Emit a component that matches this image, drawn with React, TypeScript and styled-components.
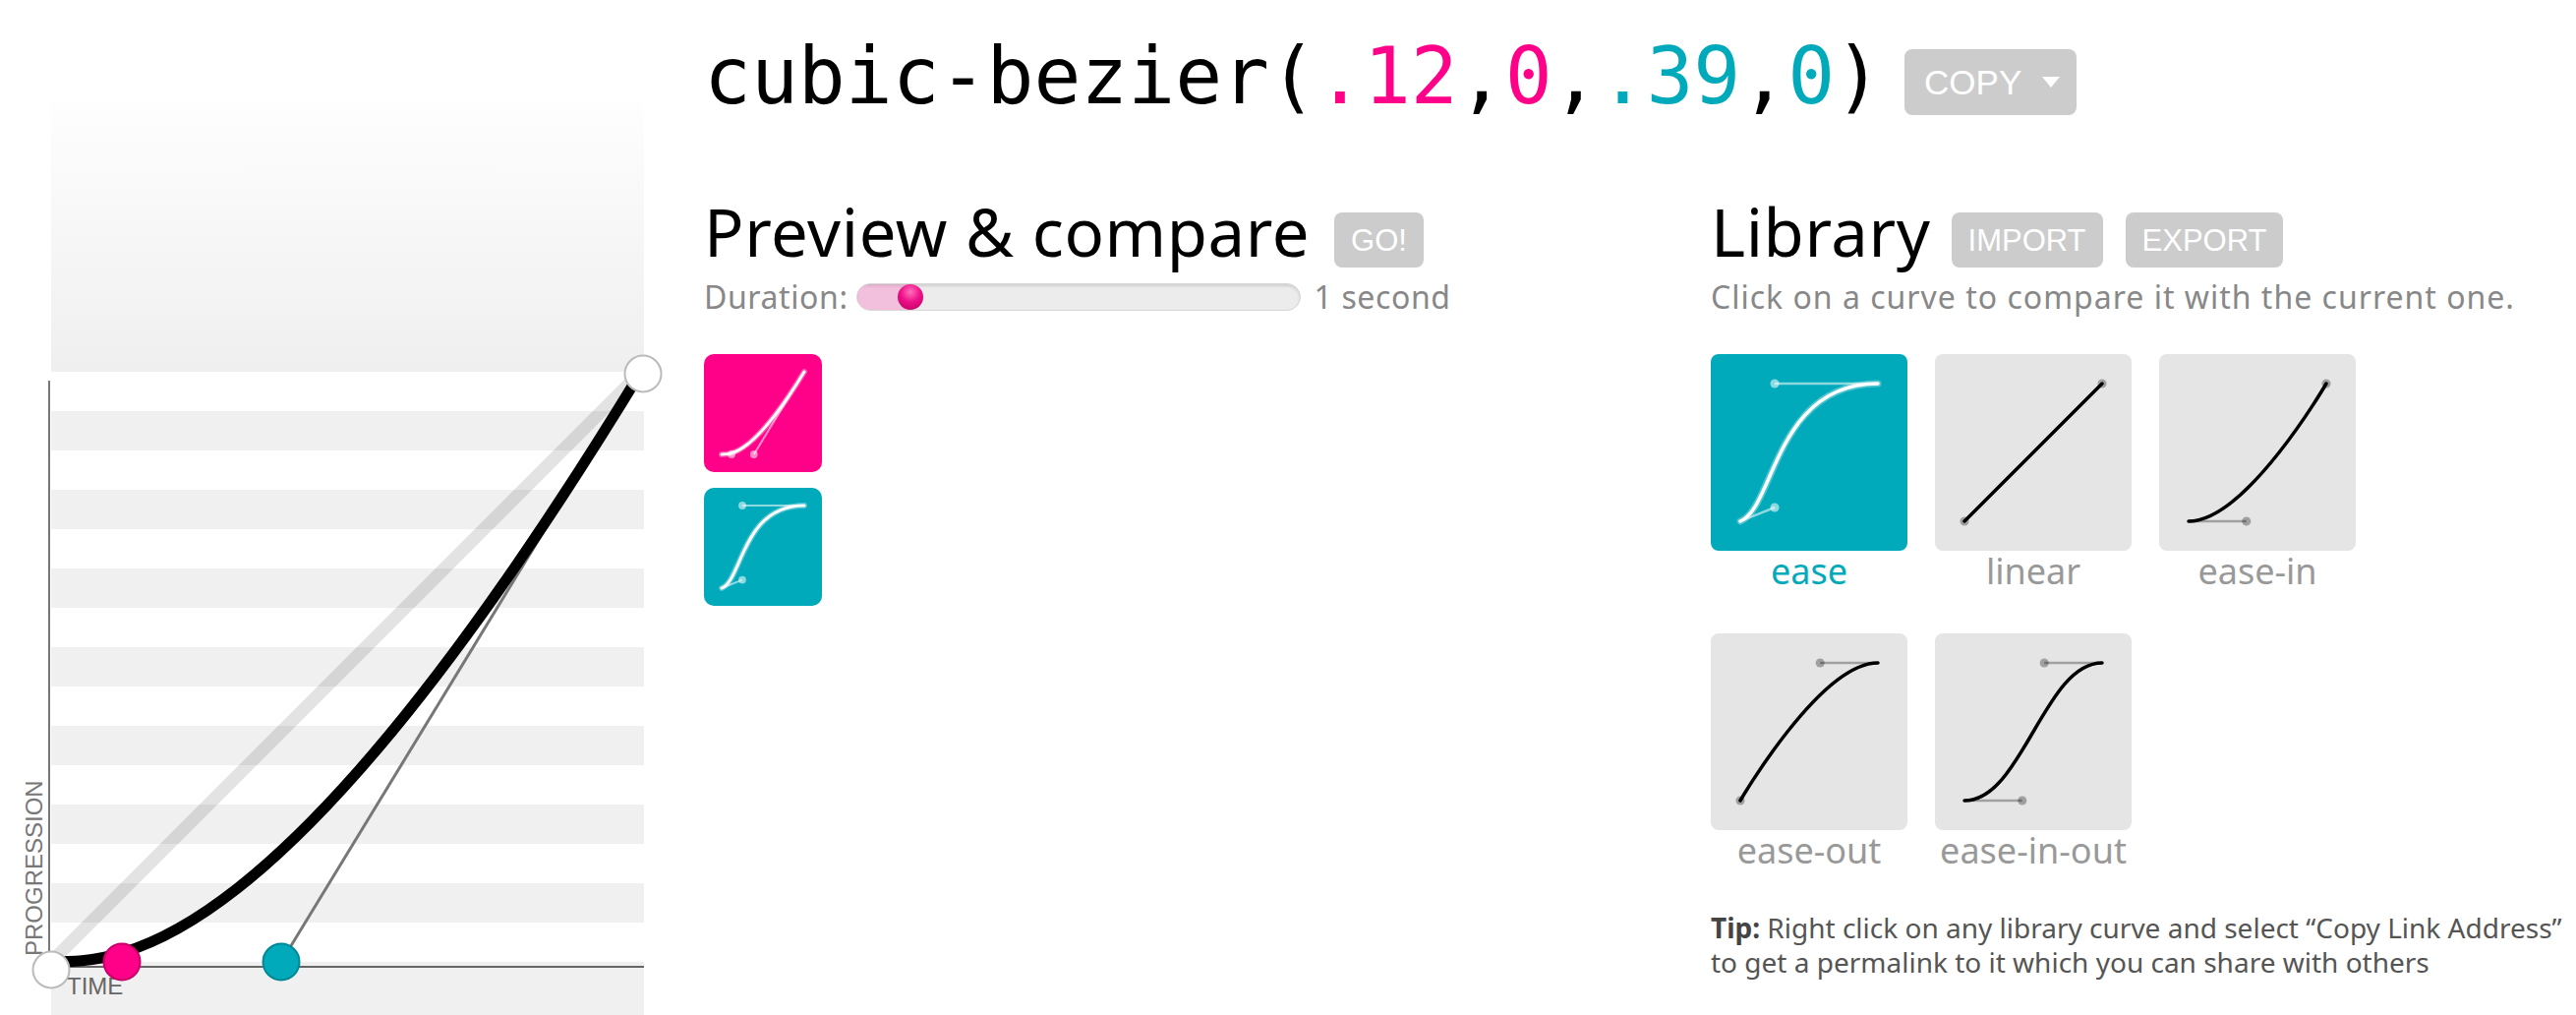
import React from "react";
import styled, { createGlobalStyle } from "styled-components";

const PINK = "#ff0088";
const TEAL = "#00aabb";

const GlobalStyle = createGlobalStyle`
  html, body { margin: 0; padding: 0; background: #fff; }
  body { font-family: "Noto Sans", "Liberation Sans", sans-serif; color: #000; }
  * { box-sizing: border-box; }
`;

const Page = styled.div`
  display: flex;
  width: 2620px;
  height: 1032px;
  overflow: hidden;
`;

const GraphColumn = styled.div`
  flex: 0 0 700px;
  height: 1032px;
  svg { display: block; }
`;

const Main = styled.div`
  flex: 1;
  display: flex;
  flex-direction: column;
  padding: 38px 0 0 16px;
`;

const TitleRow = styled.div`
  display: flex;
  align-items: flex-start;
`;

const Title = styled.h1`
  margin: 0;
  font-family: "DejaVu Sans Mono", monospace;
  font-weight: normal;
  font-size: 79.6px;
  line-height: 79px;
  color: #000;
  white-space: nowrap;
`;

const Num = styled.span<{ $c: string }>`
  color: ${(p) => p.$c};
`;

const GreyButton = styled.button<{ $ml?: number }>`
  display: inline-flex;
  align-items: center;
  border: none;
  margin: 14px 0 0 ${(p) => p.$ml ?? 0}px;
  padding: 0 17px;
  height: 56px;
  border-radius: 8px;
  background: #cccccc;
  color: #fff;
  font-family: "Liberation Sans", Arial, sans-serif;
  font-size: 31px;
  line-height: 1;
  white-space: nowrap;
`;

const CopyButton = styled(GreyButton)`
  margin: 12px 0 0 23px;
  height: 67px;
  padding: 0 17px 0 20px;
  font-size: 35px;
  gap: 21px;
  &::after {
    content: "";
    width: 0;
    height: 0;
    border-left: 9px solid transparent;
    border-right: 9px solid transparent;
    border-top: 11px solid #fff;
  }
`;

const Columns = styled.div`
  display: flex;
  margin-top: 85px;
`;

const PreviewCol = styled.section`
  flex: 0 0 1024px;
  display: flex;
  flex-direction: column;
`;

const LibraryCol = styled.section`
  flex: 1;
  display: flex;
  flex-direction: column;
`;

const HeadingRow = styled.div`
  display: flex;
  align-items: flex-start;
`;

const Heading = styled.h2`
  margin: 0;
  font-weight: normal;
  font-size: 67px;
  line-height: 67px;
  letter-spacing: 0.6px;
  color: #000;
  white-space: nowrap;
`;

const SubRow = styled.div<{ $ls?: number }>`
  display: flex;
  align-items: center;
  margin-top: 12px;
  height: 36px;
  font-size: 32px;
  line-height: 36px;
  letter-spacing: ${(p) => p.$ls ?? 1}px;
  color: #888;
  white-space: nowrap;
`;

const Track = styled.div`
  position: relative;
  width: 452px;
  height: 28px;
  margin: 0 14px 0 8px;
  border-radius: 14px;
  background: #ececec;
  border: 1px solid #d6d6d6;
  box-shadow: inset 0 2px 3px rgba(0, 0, 0, 0.12);
  overflow: hidden;
`;

const TrackFill = styled.div`
  position: absolute;
  left: 0;
  top: 0;
  bottom: 0;
  background: #f2c0dc;
  box-shadow: inset 0 2px 3px rgba(0, 0, 0, 0.1);
`;

const Thumb = styled.div`
  position: absolute;
  top: 0;
  width: 26px;
  height: 26px;
  border-radius: 50%;
  background: radial-gradient(circle at 50% 30%, #ff70bb 0%, #ee1088 45%, #b8005e 100%);
`;

const PreviewTiles = styled.div`
  display: flex;
  flex-direction: column;
  gap: 16px;
  margin-top: 40px;
`;

const Tile = styled.div<{ $size: number; $bg: string; $r: number }>`
  width: ${(p) => p.$size}px;
  height: ${(p) => p.$size}px;
  border-radius: ${(p) => p.$r}px;
  background: ${(p) => p.$bg};
  svg { display: block; }
`;

const LibraryGrid = styled.div`
  display: grid;
  grid-template-columns: repeat(3, 200px);
  column-gap: 28px;
  row-gap: 42px;
  margin-top: 40px;
`;

const LibraryItem = styled.div`
  display: flex;
  flex-direction: column;
`;

const Label = styled.div<{ $active?: boolean }>`
  font-size: 36px;
  line-height: 42px;
  text-align: center;
  color: ${(p) => (p.$active ? TEAL : "#999")};
`;

const Tip = styled.p`
  margin: 40px 0 0;
  font-size: 28px;
  line-height: 35px;
  color: #555;
  white-space: nowrap;
  b { color: #444; font-weight: bold; }
`;

type Bez = [number, number, number, number];

const MiniCurve: React.FC<{ p: Bez; light: boolean; sw: number }> = ({ p, light, sw }) => {
  const [a, b, c, d] = p;
  const X = (v: number) => 30 + v * 140;
  const Y = (v: number) => 170 - v * 140;
  const fg = light ? "#fff" : "#000";
  const hc = light ? "rgba(255,255,255,0.55)" : "rgba(0,0,0,0.3)";
  const curve = `M${X(0)},${Y(0)} C${X(a)},${Y(b)} ${X(c)},${Y(d)} ${X(1)},${Y(1)}`;
  return (
    <svg viewBox="0 0 200 200" width="100%" height="100%">
      <line x1={X(0)} y1={Y(0)} x2={X(a)} y2={Y(b)} stroke={hc} strokeWidth={sw * 0.7} />
      <line x1={X(1)} y1={Y(1)} x2={X(c)} y2={Y(d)} stroke={hc} strokeWidth={sw * 0.7} />
      <circle cx={X(a)} cy={Y(b)} r={sw * 1.3} fill={hc} />
      <circle cx={X(c)} cy={Y(d)} r={sw * 1.3} fill={hc} />
      {light && (
        <path d={curve} stroke="rgba(255,255,255,0.3)" strokeWidth={sw * 2} fill="none" strokeLinecap="round" />
      )}
      <path d={curve} stroke={fg} strokeWidth={sw} fill="none" strokeLinecap="round" />
    </svg>
  );
};

const Graph: React.FC = () => {
  const x0 = 52, y0 = 978, x1 = 652, y1 = 378;
  const W = x1 - x0, H = y0 - y1;
  const p1 = [x0 + 0.12 * W, y0 - 0 * H];
  const p2 = [x0 + 0.39 * W, y0 - 0 * H];
  const stripes = [0, 1, 2, 3, 4, 5, 6].map((i) => 418 + 80 * i);
  return (
    <svg width="700" height="1032" viewBox="0 0 700 1032">
      <defs>
        <linearGradient id="topfade" x1="0" y1="0" x2="0" y2="1">
          <stop offset="0" stopColor="#fefefe" />
          <stop offset="1" stopColor="#efefef" />
        </linearGradient>
      </defs>
      <rect x={52} y={102} width={603} height={276} fill="url(#topfade)" />
      {stripes.map((y) => (
        <rect key={y} x={52} y={y} width={603} height={40} fill="#f0f0f0" />
      ))}
      <rect x={52} y={978} width={603} height={54} fill="#f0f0f0" />
      <line x1={50} y1={387} x2={50} y2={984} stroke="#777" strokeWidth={2} />
      <line x1={50} y1={983} x2={655} y2={983} stroke="#666" strokeWidth={2} />
      <text
        transform="translate(43,972) rotate(-90)"
        fontFamily="Liberation Sans, Arial, sans-serif"
        fontSize={24}
        fill="#777"
      >
        PROGRESSION
      </text>
      <text x={68} y={1011} fontFamily="Liberation Sans, Arial, sans-serif" fontSize={24} fill="#666">
        TIME
      </text>
      <line x1={x0} y1={y0} x2={x1} y2={y1} stroke="rgba(0,0,0,0.11)" strokeWidth={13} />
      <line x1={x0} y1={y0} x2={p1[0]} y2={p1[1]} stroke="#777" strokeWidth={3} />
      <line x1={p2[0]} y1={p2[1]} x2={x1} y2={y1} stroke="#777" strokeWidth={3} />
      <path
        d={`M${x0},${y0} C${p1[0]},${p1[1]} ${p2[0]},${p2[1]} ${x1},${y1}`}
        stroke="#000"
        strokeWidth={11}
        fill="none"
      />
      <circle cx={52} cy={986} r={18.5} fill="#fff" stroke="#bbb" strokeWidth={2} />
      <circle cx={654} cy={380} r={18.5} fill="#fff" stroke="#bbb" strokeWidth={2} />
      <circle cx={p1[0]} cy={p1[1]} r={18.5} fill={PINK} stroke="#c8006a" strokeWidth={2} />
      <circle cx={p2[0]} cy={p2[1]} r={18.5} fill={TEAL} stroke="#008895" strokeWidth={2} />
    </svg>
  );
};

const library: { name: string; p: Bez }[] = [
  { name: "ease", p: [0.25, 0.1, 0.25, 1] },
  { name: "linear", p: [0, 0, 1, 1] },
  { name: "ease-in", p: [0.42, 0, 1, 1] },
  { name: "ease-out", p: [0, 0, 0.58, 1] },
  { name: "ease-in-out", p: [0.42, 0, 0.58, 1] },
];

export default function App() {
  const thumbLeft = 41;
  return (
    <>
      <GlobalStyle />
      <Page>
        <GraphColumn>
          <Graph />
        </GraphColumn>
        <Main>
          <TitleRow>
            <Title>
              cubic-bezier(<Num $c={PINK}>.12</Num>,<Num $c={PINK}>0</Num>,
              <Num $c={TEAL}>.39</Num>,<Num $c={TEAL}>0</Num>)
            </Title>
            <CopyButton>COPY</CopyButton>
          </TitleRow>
          <Columns>
            <PreviewCol>
              <HeadingRow>
                <Heading>Preview &amp; compare</Heading>
                <GreyButton $ml={25}>GO!</GreyButton>
              </HeadingRow>
              <SubRow $ls={0.6}>
                Duration:
                <Track>
                  <TrackFill style={{ width: thumbLeft + 13 }} />
                  <Thumb style={{ left: thumbLeft }} />
                </Track>
                1 second
              </SubRow>
              <PreviewTiles>
                <Tile $size={120} $bg={PINK} $r={10}>
                  <MiniCurve p={[0.12, 0, 0.39, 0]} light sw={5} />
                </Tile>
                <Tile $size={120} $bg={TEAL} $r={10}>
                  <MiniCurve p={[0.25, 0.1, 0.25, 1]} light sw={5} />
                </Tile>
              </PreviewTiles>
            </PreviewCol>
            <LibraryCol>
              <HeadingRow>
                <Heading>Library</Heading>
                <GreyButton $ml={21}>IMPORT</GreyButton>
                <GreyButton $ml={23}>EXPORT</GreyButton>
              </HeadingRow>
              <SubRow>Click on a curve to compare it with the current one.</SubRow>
              <LibraryGrid>
                {library.map((c, i) => (
                  <LibraryItem key={c.name}>
                    <Tile $size={200} $bg={i === 0 ? TEAL : "#e5e5e5"} $r={8}>
                      <MiniCurve p={c.p} light={i === 0} sw={3.5} />
                    </Tile>
                    <Label $active={i === 0}>{c.name}</Label>
                  </LibraryItem>
                ))}
              </LibraryGrid>
              <Tip>
                <b>Tip:</b> Right click on any library curve and select “Copy Link Address”
                <br />
                to get a permalink to it which you can share with others
              </Tip>
            </LibraryCol>
          </Columns>
        </Main>
      </Page>
    </>
  );
}
